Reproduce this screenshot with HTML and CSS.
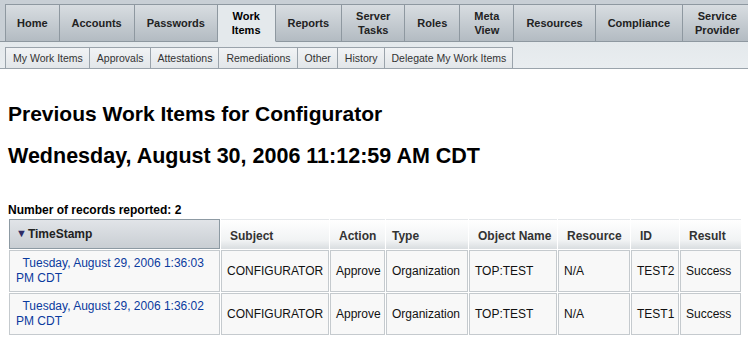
FILE: index.html
```html
<!DOCTYPE html>
<html lang="en">
<head>
  <meta charset="UTF-8" />
  <title>Previous Work Items</title>
  <link rel="stylesheet" href="styles.css">
</head>
<body>

  <div class="tabbar">
    <a class="tab">Home</a>
    <a class="tab">Accounts</a>
    <a class="tab">Passwords</a>
    <a class="tab two selected">Work<br>Items</a>
    <a class="tab">Reports</a>
    <a class="tab two">Server<br>Tasks</a>
    <a class="tab">Roles</a>
    <a class="tab two">Meta<br>View</a>
    <a class="tab">Resources</a>
    <a class="tab">Compliance</a>
    <a class="tab last">Service<br>Provider</a>
  </div>

  <div class="subbar">
    <a class="subtab">My Work Items</a>
    <a class="subtab">Approvals</a>
    <a class="subtab">Attestations</a>
    <a class="subtab">Remediations</a>
    <a class="subtab">Other</a>
    <a class="subtab">History</a>
    <a class="subtab">Delegate My Work Items</a>
  </div>

  <div class="content">
    <h2>Previous Work Items for Configurator</h2>
    <h2 class="date">Wednesday, August 30, 2006 11:12:59 AM CDT</h2>

    <div class="count">Number of records reported: 2</div>

    <table class="report">
      <colgroup>
        <col style="width:211px">
        <col style="width:108px">
        <col style="width:55px">
        <col style="width:82px">
        <col style="width:88px">
        <col style="width:72px">
        <col style="width:48px">
        <col style="width:61px">
      </colgroup>
      <tr>
        <th class="sorted"><span class="arrow">&#9660;</span>TimeStamp</th>
        <th>Subject</th>
        <th>Action</th>
        <th class="tight">Type</th>
        <th>Object Name</th>
        <th>Resource</th>
        <th>ID</th>
        <th>Result</th>
      </tr>
      <tr>
        <td><a class="link">&nbsp; Tuesday, August 29, 2006 1:36:03 PM CDT</a></td>
        <td>CONFIGURATOR</td>
        <td>Approve</td>
        <td>Organization</td>
        <td>TOP:TEST</td>
        <td>N/A</td>
        <td>TEST2</td>
        <td>Success</td>
      </tr>
      <tr>
        <td><a class="link">&nbsp; Tuesday, August 29, 2006 1:36:02 PM CDT</a></td>
        <td>CONFIGURATOR</td>
        <td>Approve</td>
        <td>Organization</td>
        <td>TOP:TEST</td>
        <td>N/A</td>
        <td>TEST1</td>
        <td>Success</td>
      </tr>
    </table>
  </div>

</body>
</html>
```

FILE: styles.css
```css
* { box-sizing: border-box; }
body {
  margin: 0;
  font-family: "Liberation Sans", Arial, sans-serif;
  color: #000;
  background: #fff;
}

/* main tabs */
.tabbar {
  display: flex;
  padding: 4px 0 0 5px;
  background: #c8cfd5;
  border-bottom: 1px solid #8e98a0;
}
.tab {
  display: flex;
  align-items: center;
  justify-content: center;
  height: 38px;
  margin-bottom: -1px;
  padding: 0 12px;
  text-align: center;
  font-size: 11px;
  font-weight: bold;
  line-height: 14px;
  color: #222;
  background: linear-gradient(#d8dde1, #b3bbc2);
  border: 1px solid #8e98a0;
  border-left: none;
}
.tab:first-child {
  padding: 0 11px;
  border-left: 1px solid #8e98a0;
}
.tab.two { padding: 0 14px; }
.tab.selected {
  background: #e4e9ec;
  border-bottom-color: #e4e9ec;
  color: #000;
}
.tab.last {
  flex: 1;
  border-right: none;
  padding: 0 12px;
}

/* sub tabs */
.subbar {
  display: flex;
  height: 27px;
  padding: 5px 0 0 5px;
  background: linear-gradient(#e4e9ec, #e9edf0);
  border-bottom: 1px solid #9aa3ab;
}
.subtab {
  height: 22px;
  margin-bottom: -1px;
  padding: 0 6px 0 7px;
  font-size: 10.5px;
  line-height: 20px;
  color: #333;
  background: linear-gradient(#f1f3f5, #e2e6e9);
  border: 1px solid #9aa3ab;
  border-left: none;
}
.subtab:first-child { border-left: 1px solid #9aa3ab; }

/* content */
.content {
  padding: 0 8px;
}
h2 {
  margin: 0;
  font-size: 21px;
  font-weight: bold;
  line-height: 24px;
}
h2:first-child { margin-top: 33px; }
h2.date {
  margin-top: 18px;
  font-size: 21.5px;
}
.count {
  margin-top: 35px;
  font-size: 12px;
  font-weight: bold;
  line-height: 14px;
}

.report {
  width: 734px;
  margin: 1px 0 0 0;
  table-layout: fixed;
  border-collapse: separate;
  border-spacing: 1px;
  font-size: 12px;
}
.report th {
  height: 30px;
  padding: 2px 8px 0 9px;
  white-space: nowrap;
  text-align: left;
  font-weight: bold;
  color: #333;
  background: linear-gradient(#ffffff, #f1f3f4 70%, #d9dde0);
  border-top: 1px solid #e4e7ea;
}
.report th.tight { padding-left: 6px; }
.report th.sorted {
  padding: 0 6px;
  color: #222;
  background: linear-gradient(#e1e4e8, #c9ced3);
  border: 1px solid #8d9aa3;
}
.arrow {
  font-size: 11px;
  color: #2e2c66;
  margin-right: 1px;
  vertical-align: 1px;
}
.report td {
  height: 42px;
  padding: 0 5px;
  line-height: 15px;
  color: #111;
  background: #f8f8f8;
  border: 1px solid #c5cace;
}
.report td:first-child { padding-left: 6px; }
.link {
  color: #0a3a9e;
}
```
